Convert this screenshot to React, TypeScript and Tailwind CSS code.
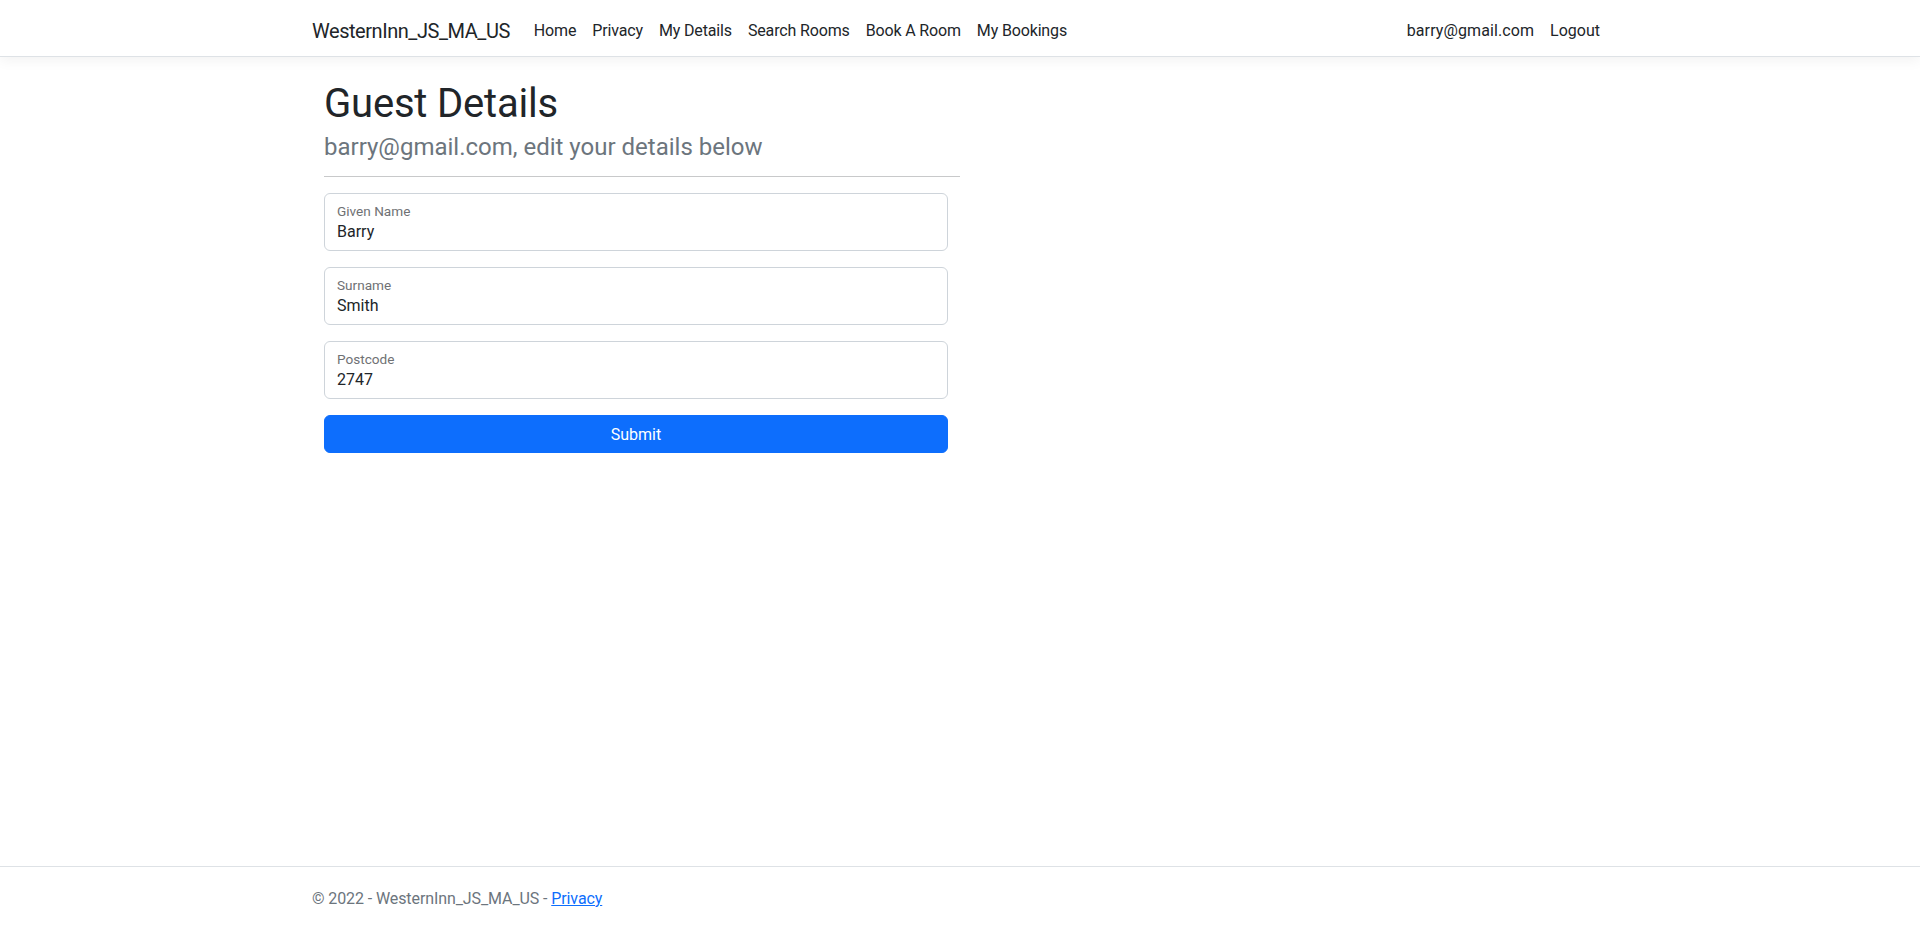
import React from "react";

const leftLinks = ["Home", "Privacy", "My Details", "Search Rooms", "Book A Room", "My Bookings"];

const fields = [
  { label: "Given Name", value: "Barry" },
  { label: "Surname", value: "Smith" },
  { label: "Postcode", value: "2747" },
];

export default function App() {
  return (
    <div className="flex h-screen flex-col overflow-hidden bg-white font-['Roboto','Segoe_UI',sans-serif] text-[16px] text-[#212529]">
      <header className="relative z-10 h-[57px] shrink-0 border-b border-[#dee2e6] bg-white shadow-[0_4px_12px_rgba(0,0,0,0.05)]">
        <nav className="mx-auto flex h-full max-w-[1320px] items-center px-[12px] pt-[5px]">
          <a href="#" className="mr-[16px] py-[5px] text-[20px] leading-[30px] tracking-[-0.45px] text-[#212529]">
            WesternInn_JS_MA_US
          </a>
          <ul className="flex">
            {leftLinks.map((l) => (
              <li key={l}>
                <a href="#" className="block px-[8px] py-[8px] leading-[24px] tracking-[-0.15px] text-[#212529]">
                  {l}
                </a>
              </li>
            ))}
          </ul>
          <ul className="ml-auto flex">
            <li>
              <a href="#" className="block px-[8px] py-[8px] leading-[24px] tracking-[0.1px] text-[#212529]">
                barry@gmail.com
              </a>
            </li>
            <li>
              <button type="button" className="block px-[8px] py-[8px] leading-[24px] text-[#212529]">
                Logout
              </button>
            </li>
          </ul>
        </nav>
      </header>

      <main className="flex-1">
        <div className="mx-auto max-w-[1320px] px-[24px] pt-[23px]">
          <h1 className="text-[40px] font-normal leading-[48px] tracking-[-0.2px]">Guest Details</h1>
          <p className="mt-[5px] text-[24px] leading-[28.8px] text-[#6c757d]">
            barry@gmail.com, edit your details below
          </p>
          <hr className="mt-[14px] w-[636px] border-[#c8c9ca]" />
          <form className="mt-4 flex w-[624px] flex-col gap-4" onSubmit={(e) => e.preventDefault()}>
            {fields.map((f) => (
              <div
                key={f.label}
                className="flex h-[58px] flex-col rounded-[6px] border border-[#ced4da] bg-white px-[12px] pt-[9px]"
              >
                <label className="text-[13.6px] leading-[16px] text-[#6f7174]">{f.label}</label>
                <input
                  defaultValue={f.value}
                  className="mt-[1px] h-[24px] w-full bg-transparent text-[16px] leading-[24px] text-[#212529] outline-none"
                />
              </div>
            ))}
            <button
              type="submit"
              className="h-[38px] w-full rounded-[6px] border border-[#0d6efd] bg-[#0d6efd] pt-[2px] text-[16px] leading-[24px] text-white"
            >
              Submit
            </button>
          </form>
        </div>
      </main>

      <footer className="h-[61px] shrink-0 border-t border-[#dee2e6] text-[#6c757d]">
        <div className="mx-auto max-w-[1320px] whitespace-nowrap px-[12px] pt-[2px] leading-[60px] tracking-[-0.1px]">
          © 2022 - WesternInn_JS_MA_US -{" "}
          <a href="#" className="text-[#0d6efd] underline">
            Privacy
          </a>
        </div>
      </footer>
    </div>
  );
}
